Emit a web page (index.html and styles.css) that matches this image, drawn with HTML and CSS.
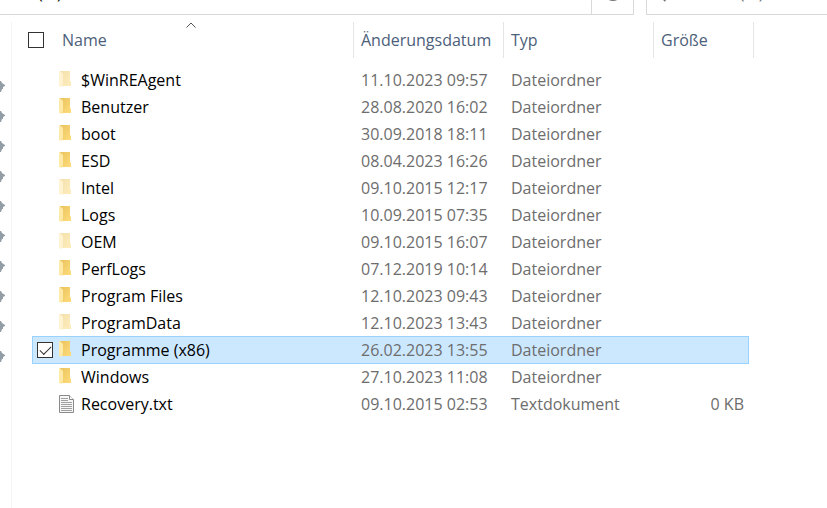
FILE: index.html
```
<!DOCTYPE html>
<html lang="de">
<head>
  <meta charset="UTF-8">
  <meta name="viewport" content="width=device-width, initial-scale=1.0">
  <title>Explorer</title>
  <link rel="stylesheet" href="styles.css">
</head>
<body>

  <!-- Symbole -->
  <svg class="defs" aria-hidden="true">
    <defs>
      <linearGradient id="gold" x1="0" y1="0" x2="1" y2="1">
        <stop offset="0" stop-color="#e8c25c"/>
        <stop offset="1" stop-color="#ffdc7c"/>
      </linearGradient>
      <symbol id="folder" viewBox="0 0 16 18">
        <path d="M1 0h10v10l1 1v4H3z" fill="url(#gold)"/>
        <path d="M0 0l2 1 2 2v9l-1 4-3-1z" fill="#ffe9a6"/>
      </symbol>
      <symbol id="file" viewBox="0 0 16 18">
        <path d="M.5.5h10l4 4v13H.5z" fill="#f7f7f7" stroke="#8a8a8a"/>
        <path d="M10.500.5v4h4" fill="#fff" stroke="#8a8a8a"/>
        <path d="M2 3.500h7M2 5.500h7M2 7.500h11M2 9.500h11M2 11.500h11M2 13.500h11M2 15.500h11" stroke="#a0a0a0"/>
      </symbol>
      <symbol id="pin" viewBox="0 0 6 12">
        <path d="M0 0h1l1 2 3 2v1L3 6v2H2l-1 3H0z" fill="#929da6"/>
      </symbol>
    </defs>
  </svg>

  <header class="topbar">
    <input class="address" type="text" value="(C:)" aria-label="Adresse">
    <button class="refresh" aria-label="Aktualisieren">
      <svg width="18" height="18" viewBox="0 0 18 18"><path d="M14 3a7.500 7.500 0 1 1-10 0" fill="none" stroke="#777" stroke-width="2"/></svg>
    </button>
    <div class="search">
      <svg width="18" height="18" viewBox="0 0 18 18"><circle cx="11" cy="7" r="5" fill="none" stroke="#777"/><path d="M7 11l-5 6" stroke="#777" stroke-width="2"/></svg>
      <input type="text" placeholder="&quot;Acer (C:)&quot; durchsuchen" aria-label="Suchen">
    </div>
  </header>

  <div class="main">
    <nav class="sidebar" aria-label="Schnellzugriff">
      <svg class="pin"><use href="#pin"/></svg>
      <svg class="pin"><use href="#pin"/></svg>
      <svg class="pin"><use href="#pin"/></svg>
      <svg class="pin"><use href="#pin"/></svg>
      <svg class="pin"><use href="#pin"/></svg>
      <svg class="pin"><use href="#pin"/></svg>
      <svg class="pin"><use href="#pin"/></svg>
      <svg class="pin"><use href="#pin"/></svg>
      <svg class="pin"><use href="#pin"/></svg>
      <svg class="pin"><use href="#pin"/></svg>
    </nav>

    <table class="files">
      <thead>
        <tr>
          <th class="name">
            <input class="check" type="checkbox" aria-label="Alle auswählen">
            <span>Name</span>
            <svg class="sort" width="10" height="6" viewBox="0 0 10 6"><path d="M.5 5.500L5 1l4.500 4.500" fill="none" stroke="#555"/></svg>
          </th>
          <th>Änderungsdatum</th>
          <th>Typ</th>
          <th>Größe</th>
        </tr>
      </thead>
      <tbody>
        <tr><td class="name"><svg class="icon hidden"><use href="#folder"/></svg>$WinREAgent</td><td>11.10.2023 09:57</td><td>Dateiordner</td><td class="size"></td></tr>
        <tr><td class="name"><svg class="icon"><use href="#folder"/></svg>Benutzer</td><td>28.08.2020 16:02</td><td>Dateiordner</td><td class="size"></td></tr>
        <tr><td class="name"><svg class="icon"><use href="#folder"/></svg>boot</td><td>30.09.2018 18:11</td><td>Dateiordner</td><td class="size"></td></tr>
        <tr><td class="name"><svg class="icon"><use href="#folder"/></svg>ESD</td><td>08.04.2023 16:26</td><td>Dateiordner</td><td class="size"></td></tr>
        <tr><td class="name"><svg class="icon hidden"><use href="#folder"/></svg>Intel</td><td>09.10.2015 12:17</td><td>Dateiordner</td><td class="size"></td></tr>
        <tr><td class="name"><svg class="icon"><use href="#folder"/></svg>Logs</td><td>10.09.2015 07:35</td><td>Dateiordner</td><td class="size"></td></tr>
        <tr><td class="name"><svg class="icon hidden"><use href="#folder"/></svg>OEM</td><td>09.10.2015 16:07</td><td>Dateiordner</td><td class="size"></td></tr>
        <tr><td class="name"><svg class="icon"><use href="#folder"/></svg>PerfLogs</td><td>07.12.2019 10:14</td><td>Dateiordner</td><td class="size"></td></tr>
        <tr><td class="name"><svg class="icon"><use href="#folder"/></svg>Program Files</td><td>12.10.2023 09:43</td><td>Dateiordner</td><td class="size"></td></tr>
        <tr><td class="name"><svg class="icon hidden"><use href="#folder"/></svg>ProgramData</td><td>12.10.2023 13:43</td><td>Dateiordner</td><td class="size"></td></tr>
        <tr class="selected"><td class="name"><input class="check" type="checkbox" aria-label="Programme (x86) auswählen" checked><svg class="icon"><use href="#folder"/></svg>Programme (x86)</td><td>26.02.2023 13:55</td><td>Dateiordner</td><td class="size"></td></tr>
        <tr><td class="name"><svg class="icon"><use href="#folder"/></svg>Windows</td><td>27.10.2023 11:08</td><td>Dateiordner</td><td class="size"></td></tr>
        <tr><td class="name"><svg class="icon"><use href="#file"/></svg>Recovery.txt</td><td>09.10.2015 02:53</td><td>Textdokument</td><td class="size">0 KB</td></tr>
      </tbody>
    </table>
  </div>

</body>
</html>
```
FILE: styles.css
```
* {
  box-sizing: border-box;
}

body {
  margin: 0;
  min-height: 100vh;
  display: flex;
  flex-direction: column;
  background: #fff;
  color: #000;
  font: 16px/26px "Open Sans", "Noto Sans", sans-serif;
}

.defs {
  position: absolute;
  width: 0;
  height: 0;
}

/* Adressleiste, oben abgeschnitten */
.topbar {
  height: 15px;
  display: flex;
  align-items: flex-end;
  overflow: hidden;
}

.address,
.refresh,
.search {
  height: 44px;
  border: 1px solid #d9d9d9;
  background: #fff;
  font: inherit;
}

.address {
  flex: 1;
  min-width: 0;
  padding: 0 0 0 38px;
  border-width: 0 0 1px;
}

.refresh {
  width: 43px;
  margin-right: 12px;
  padding: 0;
}

.refresh svg {
  display: block;
  margin: 0 auto;
}

.search {
  display: flex;
  align-items: center;
  gap: 16px;
  width: 181px;
  padding-left: 15px;
  border-right: 0;
}

.search svg {
  flex: none;
}

.search input {
  flex: 1;
  min-width: 0;
  padding: 0;
  border: 0;
  font: inherit;
}

.search input::placeholder {
  color: #6d6d6d;
}

.main {
  flex: 1;
  display: flex;
  align-items: flex-start;
  padding-top: 7px;
}

/* Pins links */
.sidebar {
  align-self: stretch;
  display: flex;
  flex-direction: column;
  gap: 18px;
  width: 12px;
  padding-top: 59px;
  border-right: 1px solid #f3f3f3;
}

.pin {
  display: block;
  flex: none;
  width: 6px;
  height: 12px;
}

/* Dateiliste */
.files {
  display: block;
  margin-left: 16px;
}

thead,
tbody {
  display: block;
}

tr {
  display: grid;
  grid-template-columns: 321px 150px 150px 94px;
}

thead tr {
  grid-template-columns: 326px 150px 150px 100px;
  margin-bottom: 8px;
}

th,
td {
  display: flex;
  align-items: center;
  padding: 0 0 0 7px;
  white-space: nowrap;
}

th {
  position: relative;
  height: 36px;
  border-right: 1px solid #e5e5e5;
  color: #4c607a;
  font-weight: 400;
}

th.name {
  gap: 18px;
  padding-left: 0;
}

.sort {
  position: absolute;
  top: 0;
  left: calc(50% - 5px);
}

tbody {
  margin-left: 4px;
}

/* Rahmen benachbarter Zeilen überlappen */
tbody tr {
  width: 717px;
  height: 28px;
  margin-bottom: -1px;
  border: 1px solid transparent;
}

td {
  color: #6d6d6d;
}

td.name {
  padding-left: 26px;
  color: #000;
}

.size {
  justify-content: flex-end;
  padding-right: 4px;
}

.icon {
  width: 16px;
  height: 18px;
  margin-right: 6px;
}

.icon.hidden {
  opacity: 0.5;
}

tbody .selected {
  background: #cce8ff;
  border-color: #99d1ff;
}

.selected .name {
  padding-left: 4px;
}

.check {
  appearance: none;
  flex: none;
  width: 16px;
  height: 16px;
  margin: 0;
  border: 1px solid #333;
  background: #fff;
}

.selected .check {
  margin-right: 6px;
}

.check:checked::after {
  content: "";
  display: block;
  width: 10px;
  height: 5px;
  margin: 3px 2px;
  border: solid #333;
  border-width: 0 0 1px 1px;
  transform: rotate(-45deg);
}
```
